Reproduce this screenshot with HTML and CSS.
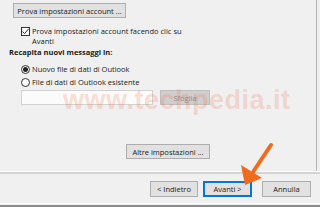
FILE: index.html
```html
<!DOCTYPE html>
<html>
<head>
<meta charset="utf-8">
<link rel="stylesheet" href="styles.css">
</head>
<body>
<div class="window">
  <div class="content">
    <div class="btn btn-test">Prova impostazioni account ...</div>
    <div class="check-row">
      <span class="checkbox">
        <svg width="9" height="9" viewBox="0 0 9 9"><path d="M1.5 4.5 L3.6 6.6 L7.6 1.8" fill="none" stroke="#333" stroke-width="1"/></svg>
      </span>
      <span class="check-text">Prova impostazioni account facendo clic su<br>Avanti</span>
    </div>
    <div class="heading">Recapita nuovi messaggi in:</div>
    <div class="radio-row first">
      <span class="radio checked"><span class="dot"></span></span>
      <span>Nuovo file di dati di Outlook</span>
    </div>
    <div class="radio-row">
      <span class="radio"></span>
      <span>File di dati di Outlook esistente</span>
    </div>
    <div class="indent">
      <div class="field-row">
        <div class="field"></div>
        <div class="btn btn-browse">Sfoglia</div>
      </div>
      <div class="more-row">
        <div class="btn btn-more">Altre impostazioni ...</div>
      </div>
    </div>
    <div class="watermark">www.techpedia.it</div>
  </div>
  <div class="separator"></div>
  <div class="footer">
    <div class="btn btn-nav">&lt; Indietro</div>
    <div class="btn btn-nav btn-default">Avanti &gt;</div>
    <div class="btn btn-nav btn-cancel">Annulla</div>
  </div>
  <div class="bottom-line"></div>
  <svg class="arrow" width="320" height="207" viewBox="0 0 320 207">
    <line x1="271" y1="145" x2="253" y2="172" stroke="#f26b1d" stroke-width="4" stroke-linecap="round"/>
    <polygon points="245,185 241,165 262,178" fill="#f26b1d"/>
  </svg>
</div>
</body>
</html>
```
FILE: styles.css
```css
* { box-sizing: border-box; }
html, body {
  margin: 0;
  padding: 0;
  background: #f0f0f0;
}
body {
  width: 320px;
  height: 207px;
  overflow: hidden;
  font-family: "Open Sans", "Noto Sans", sans-serif;
  font-size: 7.5px;
  line-height: 10px;
  color: #1a1a1a;
}
.window {
  position: relative;
  width: 320px;
  height: 207px;
  display: flex;
  flex-direction: column;
}
.content {
  position: relative;
  height: 171px;
  width: 317px;
  border-right: 1px solid #b4b4b4;
  padding-top: 3px;
  display: flex;
  flex-direction: column;
  align-items: flex-start;
}
.btn {
  height: 15px;
  border: 1px solid #adadad;
  background: #e1e1e1;
  display: flex;
  align-items: center;
  justify-content: center;
  white-space: nowrap;
  color: #1a1a1a;
}
.btn-test {
  margin-left: 13px;
  width: 113px;
}
.check-row {
  margin-top: 8px;
  margin-left: 21px;
  display: flex;
  align-items: flex-start;
}
.checkbox {
  width: 9px;
  height: 9px;
  margin-top: 1px;
  border: 1px solid #333;
  background: #fff;
  display: flex;
  margin-right: 2px;
}
.checkbox svg { margin: -1px; }
.heading {
  margin-top: 1px;
  margin-left: 9px;
  font-weight: bold;
}
.radio-row {
  margin-left: 21px;
  margin-top: 3px;
  display: flex;
  align-items: center;
}
.radio-row.first { margin-top: 7px; }
.radio {
  width: 9px;
  height: 9px;
  border: 1px solid #333;
  border-radius: 50%;
  background: #fff;
  margin-right: 2px;
  display: flex;
  align-items: center;
  justify-content: center;
}
.radio .dot {
  width: 5px;
  height: 5px;
  border-radius: 50%;
  background: #222;
}
.indent {
  margin-left: 21px;
  width: 189px;
  margin-top: 3px;
}
.field-row {
  display: flex;
  justify-content: space-between;
  height: 15px;
}
.field {
  width: 132px;
  height: 15px;
  background: #fbfbfb;
  border: 1px solid #d2d2d2;
}
.btn-browse {
  width: 50px;
  height: 15px;
  color: #8a8a8a;
  background: #cfcfcf;
  border-color: #bfbfbf;
}
.more-row {
  margin-top: 39px;
  display: flex;
  justify-content: flex-end;
}
.btn-more {
  width: 84px;
}
.watermark {
  position: absolute;
  left: 63px;
  top: 85px;
  font-family: "Liberation Sans", Arial, sans-serif;
  font-weight: bold;
  font-size: 27px;
  line-height: 30px;
  color: rgba(238, 120, 80, 0.24);
  letter-spacing: 0.5px;
  pointer-events: none;
}
.separator {
  height: 3px;
  border-top: 1px solid #ffffff;
  background: #d4d4d4;
}
.footer {
  height: 29px;
  padding-top: 7px;
  padding-right: 9px;
  display: flex;
  justify-content: flex-end;
  align-items: flex-start;
}
.btn-nav {
  width: 48px;
  height: 16px;
}
.btn-default {
  margin-left: 5px;
  width: 49px;
  border: 1px solid #0078d7;
  box-shadow: inset 0 0 0 1px #0078d7;
}
.btn-cancel {
  margin-left: 10px;
  width: 49px;
}
.bottom-line {
  height: 4px;
  border-top: 1px solid #ffffff;
  border-bottom: 2px solid #8c8c8c;
}
.arrow {
  position: absolute;
  left: 0;
  top: 0;
  pointer-events: none;
}
```
